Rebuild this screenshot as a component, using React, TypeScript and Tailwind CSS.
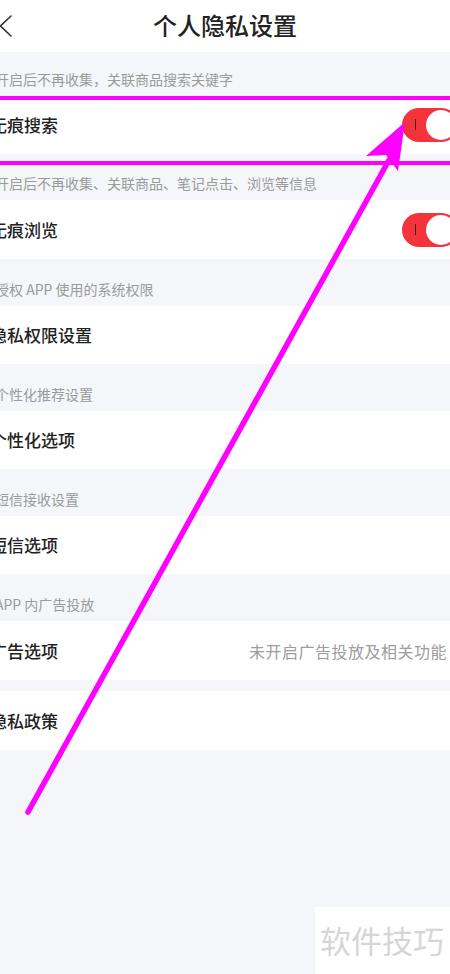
import React from "react";

const FONT = { fontFamily: '"Noto Sans CJK SC", "Noto Sans", sans-serif' };

function Toggle() {
  return (
    <div className="ml-auto mr-[-11px] relative w-[56px] h-[34px] rounded-full bg-[#f4333d] flex items-center justify-end pr-[2px]">
      <div className="absolute left-[13px] top-[11px] w-[1px] h-[11px] bg-[#3a2020]" />
      <div className="w-[30px] h-[30px] rounded-full bg-white" />
    </div>
  );
}

function SectionHeader({ text, h }: { text: string; h: string }) {
  return (
    <div className={`${h} flex items-end pb-[7px] pl-0 ml-[-5px]`}>
      <span className="text-[14px] leading-[20px] text-[#9b9b9b] whitespace-nowrap">{text}</span>
    </div>
  );
}

function Item({
  text,
  h,
  toggle,
  right,
}: {
  text: string;
  h: string;
  toggle?: boolean;
  right?: string;
}) {
  return (
    <div className={`${h} bg-white flex items-center ml-[-10px] pr-[3px]`}>
      <span className="text-[17px] leading-[24px] font-medium text-[#222222] whitespace-nowrap">{text}</span>
      {toggle && <Toggle />}
      {right && (
        <span className="ml-auto text-[16px] leading-[22px] tracking-[0.5px] text-[#9d9d9d] whitespace-nowrap">
          {right}
        </span>
      )}
    </div>
  );
}

export default function App() {
  return (
    <div className="relative w-[450px] h-[974px] overflow-hidden bg-[#f4f6f9]" style={FONT}>
      <div className="h-[52px] bg-white grid grid-cols-[60px_1fr_60px] items-center">
        <div className="flex items-center">
          <svg width="14" height="26" viewBox="0 0 14 26" className="ml-[-1px]">
            <path d="M12 3 L1.5 13 L12 23" fill="none" stroke="#333" strokeWidth="1.6" strokeLinecap="round" strokeLinejoin="round" />
          </svg>
        </div>
        <div className="text-center text-[24px] leading-[32px] font-medium text-[#222222] pb-[2px]">个人隐私设置</div>
        <div />
      </div>

      <SectionHeader h="h-[44px]" text="开启后不再收集，关联商品搜索关键字" />
      <Item h="h-[58px]" text="无痕搜索" toggle />
      <SectionHeader h="h-[46px]" text="开启后不再收集、关联商品、笔记点击、浏览等信息" />
      <Item h="h-[59px]" text="无痕浏览" toggle />
      <SectionHeader h="h-[47px]" text="授权 APP 使用的系统权限" />
      <Item h="h-[58px]" text="隐私权限设置" />
      <SectionHeader h="h-[47px]" text="个性化推荐设置" />
      <Item h="h-[58px]" text="个性化选项" />
      <SectionHeader h="h-[47px]" text="短信接收设置" />
      <Item h="h-[58px]" text="短信选项" />
      <SectionHeader h="h-[47px]" text="APP 内广告投放" />
      <Item h="h-[59px]" text="广告选项" right="未开启广告投放及相关功能" />
      <div className="h-[11px]" />
      <Item h="h-[59px]" text="隐私政策" />

      {/* watermark */}
      <div className="absolute left-[315px] top-[907px] w-[135px] h-[67px] bg-white flex items-start pl-[5px] pt-[13px]">
        <span className="text-[31px] leading-[40px] text-[#d6d6d6] whitespace-nowrap">软件技巧</span>
      </div>

      {/* annotation overlay */}
      <svg className="absolute inset-0 pointer-events-none" width="450" height="974" viewBox="0 0 450 974">
        <rect x="0" y="96" width="450" height="4" fill="#ff00ff" />
        <rect x="0" y="161" width="450" height="4" fill="#ff00ff" />
        <line x1="389" y1="160" x2="28" y2="812" stroke="#ff00ff" strokeWidth="5.5" strokeLinecap="round" />
        <polygon points="405,122 366,156 386,155 398,171" fill="#ff00ff" />
      </svg>
    </div>
  );
}
